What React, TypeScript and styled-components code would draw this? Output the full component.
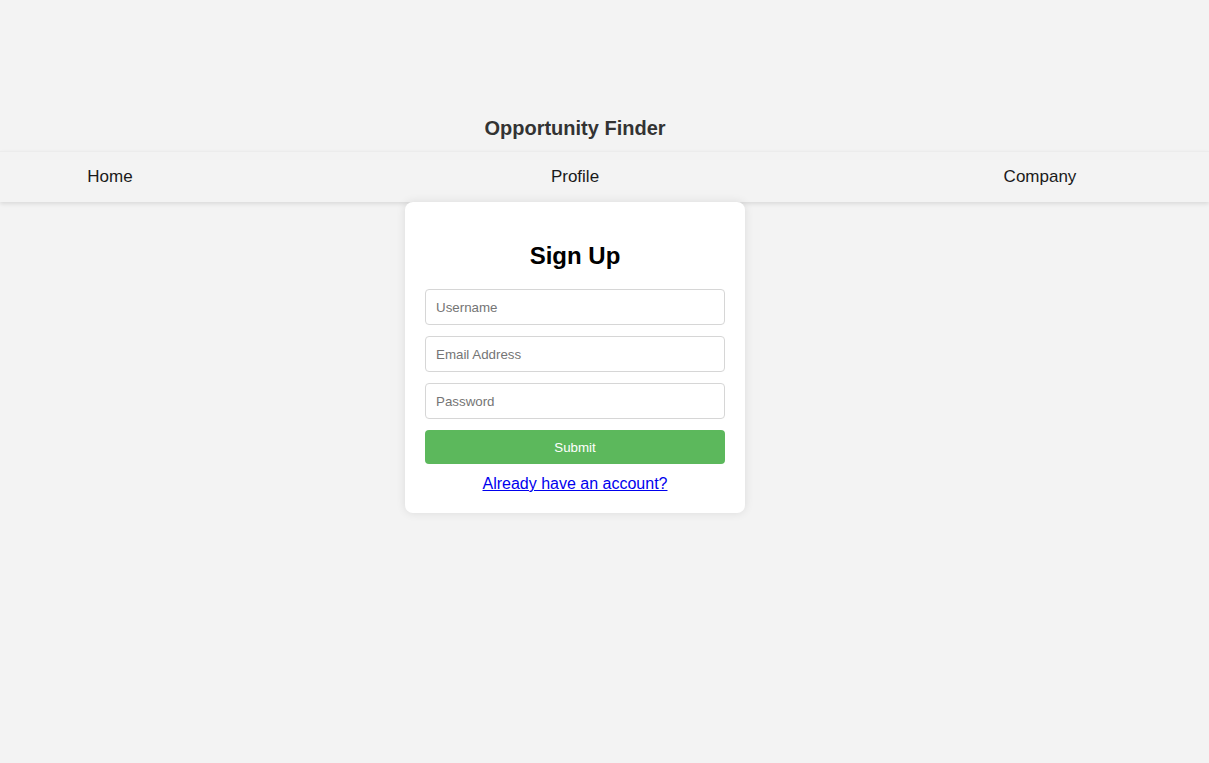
import React from "react";
import styled, { createGlobalStyle } from "styled-components";

const GlobalStyle = createGlobalStyle`
  html, body {
    margin: 0;
    padding: 0;
    background: #f3f3f3;
    font-family: "Liberation Sans", Arial, sans-serif;
  }
  * { box-sizing: border-box; }
`;

const Page = styled.div`
  min-height: 763px;
  background: #f3f3f3;
`;

const Header = styled.header`
  width: 1150px;
  padding: 117px 0 11px;
  display: flex;
  justify-content: center;
`;

const Title = styled.h1`
  margin: 0;
  font-size: 20px;
  line-height: 23px;
  font-weight: bold;
  color: #333;
`;

const Nav = styled.nav`
  width: 100%;
  border-top: 1px solid #ececec;
  background: #f3f3f3;
  box-shadow: 0 2px 4px rgba(0, 0, 0, 0.1);
`;

const NavList = styled.ul`
  list-style: none;
  margin: 0;
  padding: 0 94px 0 35px;
  height: 50px;
  display: flex;
  justify-content: space-between;
  align-items: center;
`;

const NavItem = styled.li`
  width: 150px;
  text-align: center;
  font-size: 17px;
  color: #1a1a1a;
`;

const Main = styled.main`
  width: 1150px;
  display: flex;
  justify-content: center;
`;

const Card = styled.div`
  width: 340px;
  padding: 20px;
  background: #fff;
  border-radius: 8px;
  box-shadow: 0 0 10px rgba(0, 0, 0, 0.1);
  display: flex;
  flex-direction: column;
`;

const Heading = styled.h2`
  margin: 20px 0;
  font-size: 24px;
  line-height: 27px;
  font-weight: bold;
  color: #000;
  text-align: center;
`;

const Form = styled.form`
  display: flex;
  flex-direction: column;
  gap: 11px;
`;

const Input = styled.input`
  width: 100%;
  height: 36px;
  padding: 0 10px;
  border: 1px solid #d6d6d6;
  border-radius: 4px;
  font-family: "Liberation Sans", Arial, sans-serif;
  font-size: 13.33px;
  color: #222;
  background: #fff;
  outline: none;
  &::placeholder {
    color: #757575;
  }
`;

const SubmitButton = styled.button`
  width: 100%;
  height: 34px;
  border: none;
  border-radius: 4px;
  background: #5cb85c;
  color: #fff;
  font-family: "Liberation Sans", Arial, sans-serif;
  font-size: 13.33px;
  cursor: pointer;
`;

const LinkRow = styled.p`
  margin: 11px 0 0;
  text-align: center;
  font-size: 16px;
  line-height: 18px;
`;

const Link = styled.a`
  color: #0000ee;
  text-decoration: underline;
`;

export default function App() {
  return (
    <Page>
      <GlobalStyle />
      <Header>
        <Title>Opportunity Finder</Title>
      </Header>
      <Nav>
        <NavList>
          <NavItem>Home</NavItem>
          <NavItem>Profile</NavItem>
          <NavItem>Company</NavItem>
        </NavList>
      </Nav>
      <Main>
        <Card>
          <Heading>Sign Up</Heading>
          <Form onSubmit={(e) => e.preventDefault()}>
            <Input type="text" placeholder="Username" />
            <Input type="email" placeholder="Email Address" />
            <Input type="password" placeholder="Password" />
            <SubmitButton type="submit">Submit</SubmitButton>
          </Form>
          <LinkRow>
            <Link href="#">Already have an account?</Link>
          </LinkRow>
        </Card>
      </Main>
    </Page>
  );
}
